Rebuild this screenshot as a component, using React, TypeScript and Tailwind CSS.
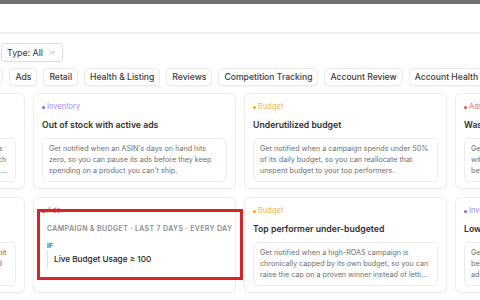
import { Fragment } from "react";
import { ChevronDown } from "lucide-react";

type Tone = "inv" | "bud" | "ads";

const tones: Record<Tone, { dot: string; text: string; label: string }> = {
  inv: { dot: "bg-[#7a68f0]", text: "text-[#9b8ef2]", label: "Inventory" },
  bud: { dot: "bg-[#f2a41c]", text: "text-[#f3b445]", label: "Budget" },
  ads: { dot: "bg-[#e04848]", text: "text-[#e36a6a]", label: "Ads" },
};

const chips = [
  "All",
  "Ads",
  "Retail",
  "Health & Listing",
  "Reviews",
  "Competition Tracking",
  "Account Review",
  "Account Health",
];

type Card = { tone: Tone; title: string; desc: string | string[]; rule?: boolean };

// cards half out of view keep their own line breaks
const rows: Card[][] = [
  [
    {
      tone: "ads",
      title: "Keywords spending without sales",
      desc: [
        "Get notified when keywords spend without sales",
        "for a full week, so you can lower the bids on each",
        "click that keeps eating into your ad spend more ...",
      ],
    },
    {
      tone: "inv",
      title: "Out of stock with active ads",
      desc: "Get notified when an ASIN's days on hand hits zero, so you can pause its ads before they keep spending on a product you can't ship.",
    },
    {
      tone: "bud",
      title: "Underutilized budget",
      desc: "Get notified when a campaign spends under 50% of its daily budget, so you can reallocate that unspent budget to your top performers.",
    },
    {
      tone: "ads",
      title: "Wasted spend on search terms",
      desc: [
        "Get notified when a search term keeps spending",
        "without converting, so you can negate it",
        "before it drains more of your budget.",
      ],
    },
  ],
  [
    {
      tone: "inv",
      title: "Stock about to run out",
      desc: [
        "Get notified when your SKU's stock is about to hit",
        "zero in a warehouse, so you can plan ahead and",
        "send more units in time.",
      ],
    },
    { tone: "ads", title: "", desc: "", rule: true },
    {
      tone: "bud",
      title: "Top performer under-budgeted",
      desc: "Get notified when a high-ROAS campaign is chronically capped by its own budget, so you can raise the cap on a proven winner instead of letting it sit idle.",
    },
    {
      tone: "inv",
      title: "Low stock with active ads",
      desc: [
        "Get notified when days on hand drops",
        "below your reorder point, so you can slow its",
        "ads before it sells out.",
      ],
    },
  ],
];

function Category({ tone }: { tone: Tone }) {
  const t = tones[tone];
  return (
    <div className="flex h-[10px] items-center gap-[2px]">
      <span className={`h-[3px] w-[3px] rounded-full ${t.dot}`} />
      <span className={`text-[7.5px] leading-[10px] ${t.text}`}>{t.label}</span>
    </div>
  );
}

function AlertCard({ card }: { card: Card }) {
  if (card.rule) {
    return (
      <div className="relative h-[96px] rounded-[6px] border border-[#ededed] bg-white px-2 pt-[8px] shadow-[0_1px_2px_rgba(0,0,0,0.03)]">
        <Category tone={card.tone} />
        <div className="mt-[8px] pl-[5px]">
          <p className="whitespace-nowrap text-[7px] font-semibold uppercase leading-[10px] tracking-[0.05em] text-[#8c8c8c]">
            Campaign &amp; Budget · Last 7 days · Every day
          </p>
          <p className="mt-[7px] text-[6.8px] font-bold leading-[9px] text-[#2f7d55]">IF</p>
          <div className="flex h-[19px] items-center border-l border-[#e2e2e2] pl-[6px]">
            <span className="text-[8.2px] font-medium text-[#222]">Live Budget Usage ≥ 100</span>
          </div>
        </div>
        <div className="pointer-events-none absolute left-[3px] top-[11px] z-10 h-[71px] w-[206px] border-[3px] border-[#d8232a]" />
      </div>
    );
  }
  return (
    <div className="relative h-[96px] rounded-[6px] border border-[#ededed] bg-white px-2 pt-[8px] shadow-[0_1px_2px_rgba(0,0,0,0.03)]">
      <Category tone={card.tone} />
      <h3 className="mt-[6px] whitespace-nowrap text-[8.7px] font-semibold leading-[14px] text-[#2e2e2e]">
        {card.title}
      </h3>
      <div className="mt-[6px] rounded-[5px] border border-[#ececec] px-[6px] py-[5px]">
        {Array.isArray(card.desc) ? (
          <p className="whitespace-nowrap text-[7.2px] leading-[10.8px] text-[#6e6e6e]">
            {card.desc.map((l, i) => (
              <Fragment key={i}>
                {i > 0 && <br />}
                {l}
              </Fragment>
            ))}
          </p>
        ) : (
          <p className="line-clamp-3 text-[7.2px] leading-[10.8px] text-[#6e6e6e]">{card.desc}</p>
        )}
      </div>
    </div>
  );
}

export default function App() {
  return (
    <div className="h-[300px] w-[480px] overflow-hidden bg-white font-['Inter',sans-serif]">
      <div className="h-[4px] bg-[#707070]" />
      <div className="h-[30px] border-b-2 border-[#ececec] bg-white" />

      <div className="pt-[9px]">
        <button className="ml-px flex h-[19px] items-center gap-[6px] rounded-[4px] border border-[#dcdcdc] bg-white pl-[5px] pr-[6px] text-[8.8px] text-[#333]">
          Type: All
          <ChevronDown className="h-[7px] w-[7px] text-[#666]" strokeWidth={2.2} />
        </button>
      </div>

      <div className="mt-[6px] ml-[-19px] flex gap-[6px]">
        {chips.map((c) => (
          <span
            key={c}
            className="flex h-[18px] shrink-0 items-center whitespace-nowrap rounded-[4px] border border-[#ebebeb] bg-white px-[5px] text-[8.6px] font-medium text-[#3a3a3a] shadow-[0_1px_1px_rgba(0,0,0,0.04)]"
          >
            {c}
          </span>
        ))}
      </div>

      <div className="mt-[7px] ml-[-178px] grid grid-cols-[repeat(4,203px)] gap-2">
        {rows.flat().map((card, i) => (
          <AlertCard key={i} card={card} />
        ))}
      </div>
    </div>
  );
}
